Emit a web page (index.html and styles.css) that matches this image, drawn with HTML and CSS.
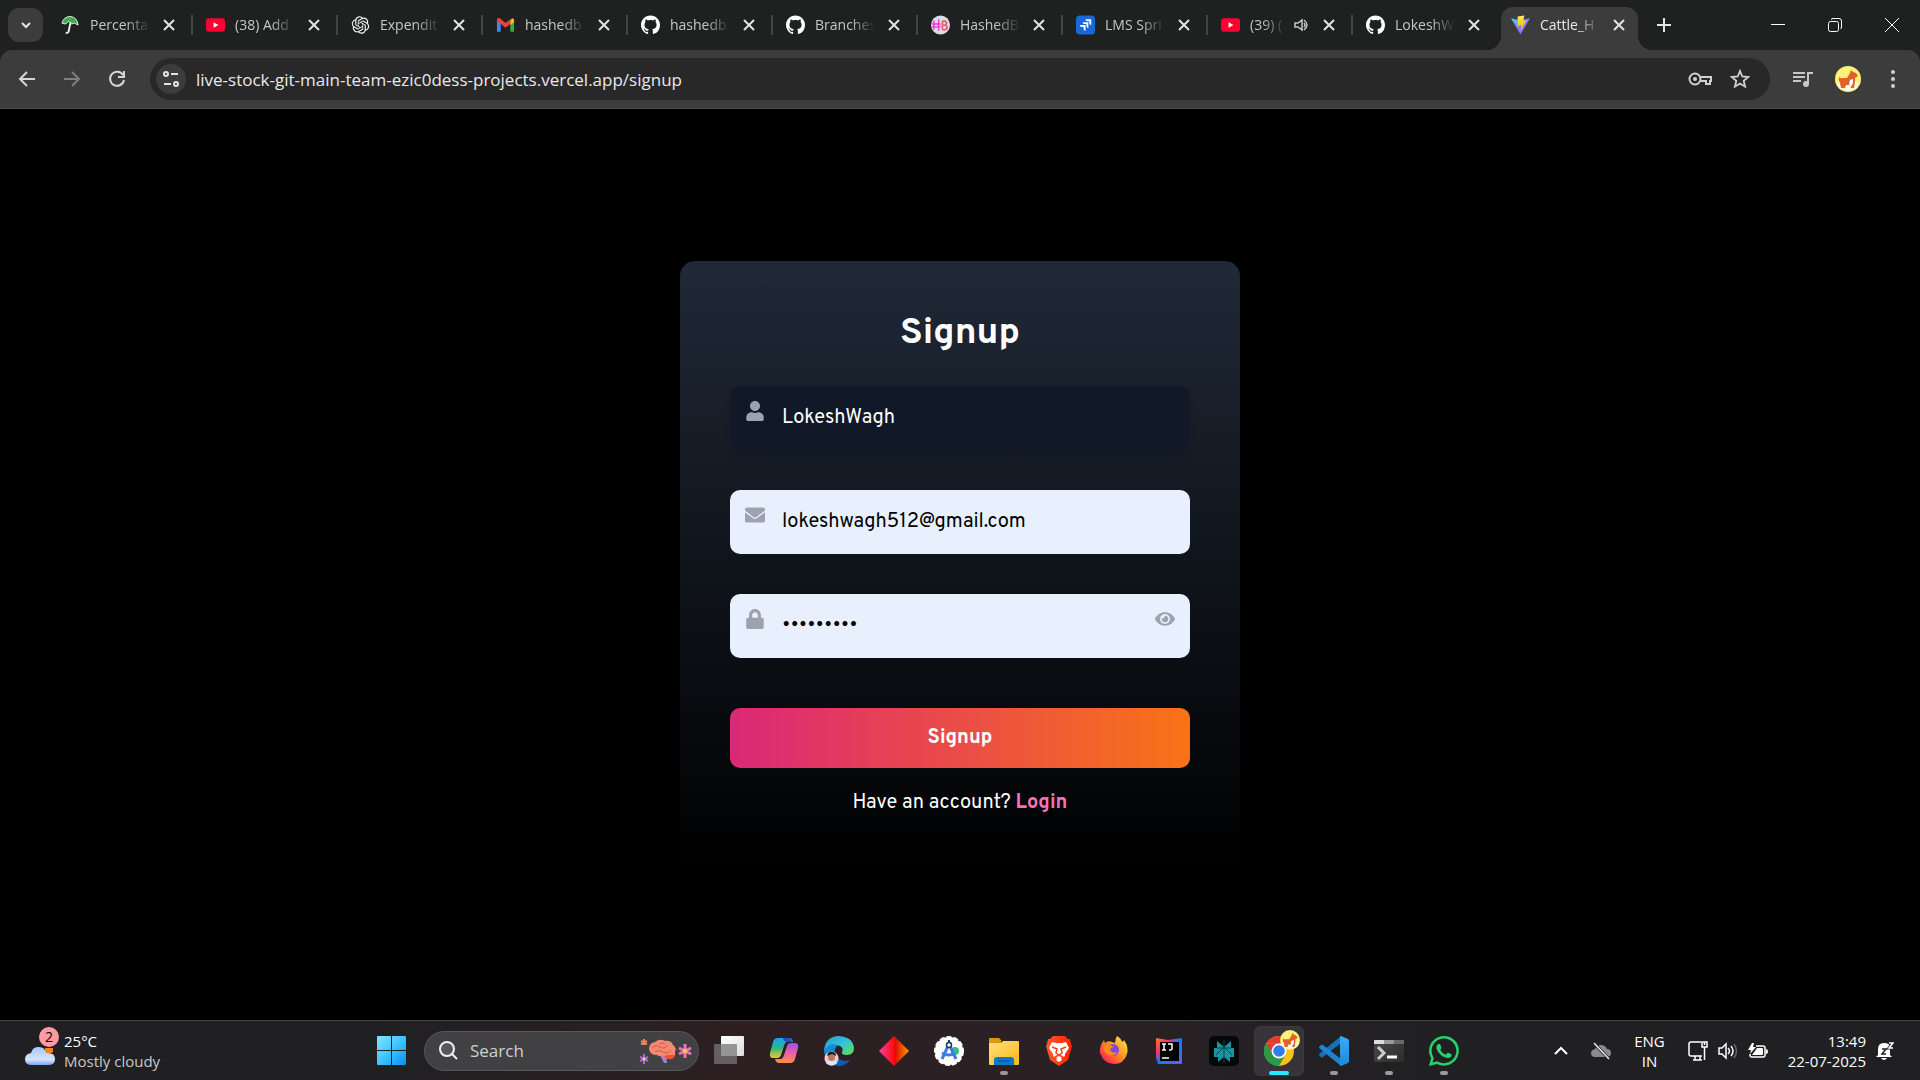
FILE: index.html
```html
<!DOCTYPE html>
<html lang="en">
<head>
<meta charset="utf-8">
<meta name="viewport" content="width=device-width, initial-scale=1">
<title>Cattle_H</title>
<link rel="stylesheet" href="styles.css">
</head>
<body>
<svg class="sprite" aria-hidden="true">
  <defs>
    <linearGradient id="g-win" x1="0" y1="0" x2="1" y2="1"><stop offset="0" stop-color="#8be3ff"/><stop offset=".5" stop-color="#3fc4ff"/><stop offset="1" stop-color="#0a8df5"/></linearGradient>
    <linearGradient id="g-cloud" x1="0" y1="0" x2="0" y2="1"><stop offset="0" stop-color="#a9c9fb"/><stop offset=".7" stop-color="#d5e3fc"/><stop offset="1" stop-color="#7ea6ec"/></linearGradient>
    <linearGradient id="g-vite" x1="0" y1="0" x2="1" y2="1"><stop offset="0" stop-color="#41d1ff"/><stop offset="1" stop-color="#bd34fe"/></linearGradient>
    <linearGradient id="g-bolt" x1="0" y1="0" x2="0" y2="1"><stop offset="0" stop-color="#ffea83"/><stop offset=".2" stop-color="#ffdd35"/><stop offset="1" stop-color="#ffa800"/></linearGradient>
    <linearGradient id="g-task" x1="0" y1="0" x2="1" y2="1"><stop offset="0" stop-color="#fff"/><stop offset="1" stop-color="#ddd"/></linearGradient>
    <linearGradient id="g-cop1" x1="0" y1="0" x2="0" y2="1"><stop offset="0" stop-color="#1aa5f2"/><stop offset=".5" stop-color="#2fb68a"/><stop offset="1" stop-color="#f3cc1c"/></linearGradient>
    <linearGradient id="g-cop2" x1="0" y1="0" x2="0" y2="1"><stop offset="0" stop-color="#9f4df0"/><stop offset=".5" stop-color="#ec5fa5"/><stop offset="1" stop-color="#ff8f3f"/></linearGradient>
    <linearGradient id="g-edge1" x1="0" y1="0" x2="1" y2="1"><stop offset="0" stop-color="#1f9de0"/><stop offset=".55" stop-color="#36c6d2"/><stop offset="1" stop-color="#66e043"/></linearGradient>
    <linearGradient id="g-edge2" x1="0" y1="0" x2="1" y2="1"><stop offset="0" stop-color="#1b9ae8"/><stop offset="1" stop-color="#0a4a94"/></linearGradient>
    <linearGradient id="g-dia"><stop offset="0" stop-color="#ff3fa8"/><stop offset=".5" stop-color="#ff0a0a"/><stop offset=".55" stop-color="#d91000"/><stop offset="1" stop-color="#ff9d00"/></linearGradient>
    <linearGradient id="g-fold" x1="0" y1="0" x2="1" y2="1"><stop offset="0" stop-color="#ffe07a"/><stop offset="1" stop-color="#fbb917"/></linearGradient>
    <linearGradient id="g-brave"><stop offset="0" stop-color="#ff5a2a"/><stop offset="1" stop-color="#ff2000"/></linearGradient>
    <linearGradient id="g-fox" x1="1" y1="0" x2="0" y2="1"><stop offset="0" stop-color="#fff44f"/><stop offset=".45" stop-color="#ff9420"/><stop offset=".8" stop-color="#ff3647"/><stop offset="1" stop-color="#e31587"/></linearGradient>
    <linearGradient id="g-ij" x1="0" y1="0" x2="1" y2="1"><stop offset="0" stop-color="#ff7a1a"/><stop offset=".3" stop-color="#fe2d75"/><stop offset=".5" stop-color="#087cfa"/><stop offset="1" stop-color="#6b57ff"/></linearGradient>
    <linearGradient id="g-code" x1="0" y1="0" x2="0" y2="1"><stop offset="0" stop-color="#35adf5"/><stop offset="1" stop-color="#1b8ada"/></linearGradient>
    <linearGradient id="g-term" x1="0" y1="0" x2="1" y2="1"><stop offset="0" stop-color="#4a4a4a"/><stop offset="1" stop-color="#2c2c2c"/></linearGradient>
  </defs>
  <symbol id="i-close" viewBox="0 0 20 20"><path d="M5 5l10 10M15 5L5 15" stroke="currentColor" stroke-width="2" fill="none"/></symbol>
  <symbol id="i-youtube" viewBox="0 0 20 20"><rect y="3" width="20" height="14" rx="3" fill="#ff0033"/><path d="M8 7v6l5-3z" fill="#fff"/></symbol>
  <symbol id="i-github" viewBox="0 0 16 16"><path fill="#fff" d="M8 0C3.58 0 0 3.58 0 8c0 3.54 2.29 6.53 5.47 7.59.4.07.55-.17.55-.38 0-.19-.01-.82-.01-1.49-2.01.37-2.53-.49-2.69-.94-.09-.23-.48-.94-.82-1.13-.28-.15-.68-.52-.01-.53.63-.01 1.08.58 1.23.82.72 1.21 1.87.87 2.33.66.07-.52.28-.87.51-1.07-1.78-.2-3.64-.89-3.64-3.95 0-.87.31-1.59.82-2.15-.08-.2-.36-1.02.08-2.12 0 0 .67-.21 2.2.82.64-.18 1.32-.27 2-.27s1.36.09 2 .27c1.53-1.04 2.2-.82 2.2-.82.44 1.1.16 1.92.08 2.12.51.56.82 1.27.82 2.15 0 3.07-1.87 3.75-3.65 3.95.29.25.54.73.54 1.48 0 1.07-.01 1.93-.01 2.2 0 .21.15.46.55.38A8.01 8.01 0 0 0 16 8c0-4.42-3.58-8-8-8z"/></symbol>
  <symbol id="i-dog" viewBox="0 0 26 26"><circle cx="13" cy="13" r="13" fill="#fff176"/><path d="M1 17a13 13 0 0 0 24 0q-12-4-24 0z" fill="#fff8dc"/><path d="M4 11q2 2 4 1h4l3-5 1-3 2 2 3 1 2 3-3 2v4l-1 6h-3l-1-3-4 0-1 3H6l-1-5q-2-3-1-6z" fill="#e2602a"/><path d="M15 14l3-1v4l-2 4-2-3z" fill="#fff"/></symbol>
</svg>

<div class="browser">
  <nav class="tabs" aria-label="Tabs">
    <button class="tab-search" aria-label="Search tabs"><svg width="16" height="16" viewBox="0 0 16 16"><path d="M4 6l4 4 4-4" fill="none" stroke="#e3e3e3" stroke-width="2"/></svg></button>

    <div class="tab">
      <svg class="favicon" viewBox="0 0 20 20"><path d="M1 8Q3 1 10 1q7 1 8 9l-4-2-3 1-3-3-3 3z" fill="#3fae49" stroke="#e8f5e9"/><path d="M10 7L8 17q-1 2-3 1" fill="none" stroke="#f0f0f0" stroke-width="2"/></svg>
      <span class="tab-title">Percenta</span><button class="tab-close" aria-label="Close tab"><svg><use href="#i-close"/></svg></button>
    </div>
    <div class="tab">
      <svg class="favicon"><use href="#i-youtube"/></svg>
      <span class="tab-title">(38) Add</span><button class="tab-close" aria-label="Close tab"><svg><use href="#i-close"/></svg></button>
    </div>
    <div class="tab">
      <svg class="favicon" viewBox="-1 -1 26 26"><path fill="#f2f2f2" d="M22.2819 9.8211a5.9847 5.9847 0 0 0-.5157-4.9108 6.0462 6.0462 0 0 0-6.5098-2.9A6.0651 6.0651 0 0 0 4.9807 4.1818a5.9847 5.9847 0 0 0-3.9977 2.9 6.0462 6.0462 0 0 0 .7427 7.0966 5.98 5.98 0 0 0 .511 4.9107 6.051 6.051 0 0 0 6.5146 2.9001A5.9847 5.9847 0 0 0 13.2599 24a6.0557 6.0557 0 0 0 5.7718-4.2058 5.9894 5.9894 0 0 0 3.9977-2.9001 6.0557 6.0557 0 0 0-.7475-7.0729zm-9.022 12.6081a4.4755 4.4755 0 0 1-2.8764-1.0408l.1419-.0804 4.7783-2.7582a.7948.7948 0 0 0 .3927-.6813v-6.7369l2.02 1.1686a.071.071 0 0 1 .038.052v5.5826a4.504 4.504 0 0 1-4.4945 4.4944zm-9.6607-4.1254a4.4708 4.4708 0 0 1-.5346-3.0137l.142.0852 4.783 2.7582a.7712.7712 0 0 0 .7806 0l5.8428-3.3685v2.3324a.0804.0804 0 0 1-.0332.0615L9.74 19.9502a4.4992 4.4992 0 0 1-6.1408-1.6464zM2.3408 7.8956a4.485 4.485 0 0 1 2.3655-1.9728V11.6a.7664.7664 0 0 0 .3879.6765l5.8144 3.3543-2.0201 1.1685a.0757.0757 0 0 1-.071 0l-4.8303-2.7865A4.504 4.504 0 0 1 2.3408 7.872zm16.5963 3.8558L13.1038 8.364 15.1192 7.2a.0757.0757 0 0 1 .071 0l4.8303 2.7913a4.4944 4.4944 0 0 1-.6765 8.1042v-5.6772a.79.79 0 0 0-.407-.667zm2.0107-3.0231l-.142-.0852-4.7735-2.7818a.7759.7759 0 0 0-.7854 0L9.409 9.2297V6.8974a.0662.0662 0 0 1 .0284-.0615l4.8303-2.7866a4.4992 4.4992 0 0 1 6.6802 4.66zM8.3065 12.863l-2.02-1.1638a.0804.0804 0 0 1-.038-.0567V6.0742a4.4992 4.4992 0 0 1 7.3757-3.4537l-.142.0805L8.704 5.459a.7948.7948 0 0 0-.3927.6813zm1.0976-2.3654l2.602-1.4998 2.6069 1.4998v2.9994l-2.5974 1.4997-2.6067-1.4997Z"/></svg>
      <span class="tab-title">Expendit</span><button class="tab-close" aria-label="Close tab"><svg><use href="#i-close"/></svg></button>
    </div>
    <div class="tab">
      <svg class="favicon" viewBox="0 0 20 20"><path d="M1 5v12h4V8z" fill="#4285f4"/><path d="M15 8v9h4V5z" fill="#34a853"/><path d="M15 5l2-2q2 0 2 2v2l-4 3z" fill="#fbbc04"/><path d="M1 5q0-3 3-2l6 5 5-4v5l-5 4-5-4-4-3z" fill="#ea4335"/></svg>
      <span class="tab-title">hashedb</span><button class="tab-close" aria-label="Close tab"><svg><use href="#i-close"/></svg></button>
    </div>
    <div class="tab">
      <svg class="favicon"><use href="#i-github"/></svg>
      <span class="tab-title">hashedb</span><button class="tab-close" aria-label="Close tab"><svg><use href="#i-close"/></svg></button>
    </div>
    <div class="tab">
      <svg class="favicon"><use href="#i-github"/></svg>
      <span class="tab-title">Branches</span><button class="tab-close" aria-label="Close tab"><svg><use href="#i-close"/></svg></button>
    </div>
    <div class="tab">
      <svg class="favicon" viewBox="0 0 20 20"><circle cx="10" cy="10" r="10" fill="#dadce8"/><path d="M3 5v10M8 4v12M1 9h9M1 12h9" stroke="#e93bd0" stroke-width="1.5" fill="none"/><path d="M12 6v9M12 6h3q3 2 0 4h-3M15 10q4 2 0 5h-3" stroke="#f2576b" stroke-width="1.8" fill="none"/></svg>
      <span class="tab-title">HashedB</span><button class="tab-close" aria-label="Close tab"><svg><use href="#i-close"/></svg></button>
    </div>
    <div class="tab">
      <svg class="favicon" viewBox="0 0 20 20"><rect width="20" height="20" rx="4" fill="#1868db"/><path d="M10 4h6v6q-2 0-2-2V6h-2q-2 0-2-2zM7 7h6v6q-2 0-2-2V9H9Q7 9 7 7zM4 10h6v6q-2 0-2-2v-2H6q-2 0-2-2z" fill="#fff"/></svg>
      <span class="tab-title">LMS Spri</span><button class="tab-close" aria-label="Close tab"><svg><use href="#i-close"/></svg></button>
    </div>
    <div class="tab">
      <svg class="favicon"><use href="#i-youtube"/></svg>
      <span class="tab-title">(39) (</span>
      <svg class="audio" viewBox="0 0 16 16"><path d="M1 6h3l4-3v10l-4-3H1zM10 6q2 2 0 4M10 3q6 5 0 10" fill="none" stroke="#c7c7c7" stroke-width="1.5"/></svg>
      <button class="tab-close" aria-label="Close tab"><svg><use href="#i-close"/></svg></button>
    </div>
    <div class="tab tab-last">
      <svg class="favicon"><use href="#i-github"/></svg>
      <span class="tab-title">LokeshW</span><button class="tab-close" aria-label="Close tab"><svg><use href="#i-close"/></svg></button>
    </div>
    <div class="tab tab-active" aria-current="page">
      <svg class="favicon" viewBox="0 0 20 20"><path d="M0 3l9 2 11-2-10 17z" fill="url(#g-vite)"/><path d="M7 1l7-1-1 6 3-1-6 12 1-7-4 1z" fill="url(#g-bolt)"/></svg>
      <span class="tab-title">Cattle_H</span><button class="tab-close" aria-label="Close tab"><svg><use href="#i-close"/></svg></button>
    </div>
    <button class="new-tab" aria-label="New tab"><svg width="14" height="14" viewBox="0 0 14 14"><path d="M7 0v14M0 7h14" stroke="#e3e3e3" stroke-width="2"/></svg></button>

    <div class="window-controls">
      <button aria-label="Minimize"><svg width="14" height="14" viewBox="0 0 14 14"><path d="M0 6.500h14" stroke="#fff"/></svg></button>
      <button aria-label="Restore"><svg width="14" height="14" viewBox="0 0 14 14"><rect x=".5" y="3.500" width="10" height="10" rx="2" fill="none" stroke="#fff"/><path d="M3 1.500Q4 .5 5 .5h6q2.500 0 2.500 2.500v6q0 1-1 2" fill="none" stroke="#fff"/></svg></button>
      <button aria-label="Close window"><svg width="14" height="14" viewBox="0 0 14 14"><path d="M0 0l14 14M14 0L0 14" stroke="#fff"/></svg></button>
    </div>
  </nav>

  <div class="toolbar">
    <button aria-label="Back"><svg width="18" height="18" viewBox="0 0 18 18"><path d="M17 9H2M9 2L2 9l7 7" fill="none" stroke="#d6d6d6" stroke-width="2"/></svg></button>
    <button aria-label="Forward"><svg width="18" height="18" viewBox="0 0 18 18"><path d="M1 9h15M9 2l7 7-7 7" fill="none" stroke="#7f7f7f" stroke-width="2"/></svg></button>
    <button aria-label="Reload"><svg width="18" height="18" viewBox="0 0 18 18"><path d="M15 5a7 7 0 1 0 1 5M16 1v6h-6" fill="none" stroke="#d6d6d6" stroke-width="2"/></svg></button>
    <div class="omnibox">
      <button class="site-info" aria-label="Site information"><svg width="18" height="18" viewBox="0 0 18 18" fill="none" stroke="#e3e3e3" stroke-width="2"><circle cx="4" cy="4" r="2"/><path d="M9 4h7M2 14h7"/><circle cx="14" cy="14" r="2"/></svg></button>
      <input class="url" type="text" aria-label="Address" value="live-stock-git-main-team-ezic0dess-projects.vercel.app/signup">
      <button aria-label="Passwords"><svg width="24" height="14" viewBox="0 0 24 14"><circle cx="7" cy="7" r="5.500" fill="none" stroke="#d0d0d0" stroke-width="2"/><circle cx="7" cy="7" r="2" fill="#d0d0d0"/><path d="M12 5h11v4h-1v3h-4V9h-6" fill="none" stroke="#d0d0d0" stroke-width="2"/></svg></button>
      <button aria-label="Bookmark this tab"><svg width="20" height="20" viewBox="0 0 20 20"><path d="M10 2l2.300 5.500 6 .5-4.600 3.900 1.400 5.800L10 14.600l-5.100 3.100 1.400-5.800L1.700 8l6-.5z" fill="none" stroke="#d0d0d0" stroke-width="1.800"/></svg></button>
    </div>
    <button aria-label="Media controls"><svg width="20" height="18" viewBox="0 0 20 18"><path d="M0 3h12M0 7h12M0 11h8" stroke="#c7c7c7" stroke-width="2"/><path d="M15 14V3h5" fill="none" stroke="#c7c7c7" stroke-width="2"/><circle cx="13" cy="14" r="3" fill="#c7c7c7"/></svg></button>
    <button aria-label="Profile"><svg width="26" height="26"><use href="#i-dog"/></svg></button>
    <button aria-label="Menu"><svg width="6" height="20" viewBox="0 0 6 20" fill="#d0d0d0"><circle cx="3" cy="3" r="2"/><circle cx="3" cy="10" r="2"/><circle cx="3" cy="17" r="2"/></svg></button>
  </div>
</div>

<main class="page">
  <form class="card">
    <h1>Signup</h1>
    <div class="field field-dark">
      <svg class="field-icon" viewBox="0 0 448 512"><path d="M224 256c70.7 0 128-57.3 128-128S294.700 0 224 0 96 57.300 96 128s57.300 128 128 128zm89.600 32h-16.700c-22.200 10.200-46.900 16-72.900 16s-50.600-5.800-72.900-16h-16.700C60.200 288 0 348.200 0 422.400V464c0 26.500 21.500 48 48 48h352c26.500 0 48-21.500 48-48v-41.600c0-74.200-60.200-134.400-134.400-134.400z"/></svg>
      <input type="text" aria-label="Username" value="LokeshWagh">
    </div>
    <div class="field">
      <svg class="field-icon" viewBox="0 0 512 512"><path d="M502.300 190.800c3.900-3.100 9.700-.2 9.700 4.700V400c0 26.500-21.500 48-48 48H48c-26.500 0-48-21.500-48-48V195.600c0-5 5.700-7.800 9.700-4.700 22.400 17.400 52.100 39.500 154.100 113.600 21.100 15.400 56.700 47.800 92.200 47.600 35.700.3 72-32.800 92.300-47.600 102-74.100 131.600-96.300 154-113.700zM256 320c23.200.4 56.600-29.200 73.400-41.400 132.700-96.300 142.800-104.700 173.400-128.700 5.800-4.500 9.200-11.500 9.200-18.900v-19c0-26.500-21.500-48-48-48H48c-26.500 0-48 21.500-48 48v19c0 7.400 3.400 14.300 9.200 18.900 30.600 23.900 40.700 32.400 173.400 128.700 16.800 12.200 50.200 41.800 73.400 41.400z"/></svg>
      <input type="email" aria-label="Email" value="lokeshwagh512@gmail.com">
    </div>
    <div class="field">
      <svg class="field-icon" viewBox="0 0 448 512"><path d="M400 224h-24v-72C376 68.200 307.800 0 224 0S72 68.200 72 152v72H48c-26.500 0-48 21.500-48 48v192c0 26.500 21.500 48 48 48h352c26.500 0 48-21.500 48-48V272c0-26.500-21.500-48-48-48zm-104 0H152v-72c0-39.700 32.300-72 72-72s72 32.300 72 72v72z"/></svg>
      <input type="password" aria-label="Password" value="lokesh512">
      <button class="reveal" type="button" aria-label="Show password"><svg viewBox="0 0 576 512"><path d="M572.520 241.400C518.290 135.590 410.930 64 288 64S57.680 135.640 3.480 241.410a32.350 32.350 0 0 0 0 29.190C57.710 376.410 165.070 448 288 448s230.320-71.640 284.520-177.410a32.350 32.350 0 0 0 0-29.190zM288 400a144 144 0 1 1 144-144 143.930 143.930 0 0 1-144 144zm0-240a95.310 95.310 0 0 0-25.310 3.790 47.850 47.850 0 0 1-66.900 66.900A95.780 95.780 0 1 0 288 160z"/></svg></button>
    </div>
    <button class="submit" type="button">Signup</button>
    <p class="login">Have an account? <a href="#login">Login</a></p>
  </form>
</main>

<footer class="taskbar">
  <button class="weather">
    <span class="weather-icon"><svg width="30" height="22" viewBox="0 0 30 22"><path d="M20 3h8v4l-2 1h-6z" fill="#f58220"/><path d="M7 20q-7 0-7-6 0-5 6-6Q8 1 14 2q6 0 7 6 9-1 9 6 0 6-7 6z" fill="url(#g-cloud)"/></svg><span class="badge">2</span></span>
    <span class="weather-text"><span>25°C</span><span class="dim">Mostly cloudy</span></span>
  </button>

  <nav class="apps" aria-label="Apps">
    <button class="app" aria-label="Start"><svg viewBox="0 0 30 30" fill="url(#g-win)"><path d="M1 0h13v14H0V1q0-1 1-1zM15 0h13q1 0 1 1v13H15zM0 15h14v14H1q-1 0-1-1zM15 15h14v13q0 1-1 1H15z"/></svg></button>
    <label class="search">
      <svg width="20" height="20" viewBox="0 0 20 20"><circle cx="8" cy="8" r="7" fill="#57575a" stroke="#f0f0f0" stroke-width="2"/><path d="M13 13l5 5" stroke="#f0f0f0" stroke-width="2"/></svg>
      <input type="text" placeholder="Search" aria-label="Search">
      <svg width="52" height="26" viewBox="0 0 52 26"><path d="M20 17l4 8h3l-1-8z" fill="#9a86d8"/><path d="M9 11q0-6 6-7 5-4 10-1 6-1 8 4 4 3 2 7 1 6-6 7-5 0-5-3-5 1-7-1-7 0-8-6z" fill="#f58a72"/><path d="M24 18q6-2 11-1-1 5-6 4-4 0-5-3z" fill="#ee5230"/><path d="M12 10q4-4 8-1t8-2M15 14q4-3 8 0t8-2M19 6q4-2 6 0" fill="none" stroke="#cf5a48"/><g stroke="#f172b4" stroke-width="3"><path d="M45 6v14M39 10l12 6M39 16l12-6"/></g><circle cx="45" cy="13" r="2" fill="#ffd84d"/><g stroke="#a86be8" stroke-width="2"><path d="M4 16v10M0 19l8 4M0 23l8-4"/></g><circle cx="4" cy="21" r="1.500" fill="#ffd84d"/><path d="M4 1v6M1 3l6 3M1 6l6-3" stroke="#ee8160" stroke-width="2"/></svg>
    </label>
    <button class="app" aria-label="Task view"><svg viewBox="0 0 30 30"><rect x="7" y="0" width="23" height="20" rx="1" fill="url(#g-task)"/><path d="M1 8h21q1 0 1 1v18q0 1-1 1H1q-1 0-1-1V9q0-1 1-1z" fill="#777" fill-opacity=".75"/></svg></button>
    <button class="app" aria-label="Copilot"><svg viewBox="0 0 30 30"><path d="M20 2q3 0 4 4h-6q-2 0-3 4l-3 9q-1 3-4 3H4q-4 0-3-5L4 6q1-4 5-4z" fill="url(#g-cop1)"/><path d="M9 2h10q3 0 4 4h-5q-3 0-4-4z" fill="#1b4fc4"/><path d="M10 27q-3 0-4-4h5q3 0 4-4l3-9q1-3 4-3h4q4 0 3 5l-3 11q-1 4-5 4z" fill="url(#g-cop2)"/></svg></button>
    <button class="app" aria-label="Edge"><svg viewBox="0 0 30 30"><path d="M0 14Q2 0 15 0q14 1 15 12 0 7-7 7-6 0-5-3 2-4-2-6-8-3-16 4z" fill="url(#g-edge1)"/><path d="M0 14q5-8 14-5-4 3-3 9 3 9 15 6-4 6-11 6Q1 29 0 14z" fill="url(#g-edge2)"/><circle cx="7.500" cy="22.500" r="7" fill="#f2c9d4"/><path d="M2 27q5-6 11 0-5 5-11 0z" fill="#d8e8f5"/><circle cx="7.500" cy="21.500" r="3.500" fill="#b97b5c"/><path d="M3 20q1-5 5-4 4 0 4 4l-4-2z" fill="#1c1a20"/></svg></button>
    <button class="app" aria-label="Diamond"><svg viewBox="0 0 30 30"><path d="M15 0l15 15-15 15L0 15z" fill="url(#g-dia)"/></svg></button>
    <button class="app" aria-label="Android Studio"><svg viewBox="0 0 30 30"><circle cx="15" cy="15" r="14" fill="#fff"/><circle cx="15" cy="15" r="14" fill="none" stroke="#fff" stroke-width="2" stroke-dasharray="5 2"/><circle cx="21" cy="15" r="4" fill="#36c26e"/><path d="M15 8L8 23M15 8l7 15M8 17q7 4 13 0" fill="none" stroke="#3b7de8" stroke-width="3"/><circle cx="15" cy="9" r="2.500" fill="#fff" stroke="#173b5c" stroke-width="1.500"/><path d="M15 4v3" stroke="#173b5c" stroke-width="2"/></svg></button>
    <button class="app open" aria-label="File Explorer"><svg viewBox="0 0 30 30"><path d="M0 3q0-1 1-1h9l3 3h-1v5H0z" fill="#d99a12"/><path d="M0 7h12l2-2h15q1 0 1 1v22q0 1-1 1H1q-1 0-1-1z" fill="url(#g-fold)"/><path d="M5 29v-5q0-3 3-3h14q3 0 3 3v5z" fill="#0f78c8"/><path d="M9 25h12" stroke="#0b4f8e"/></svg></button>
    <button class="app" aria-label="Brave"><svg viewBox="0 0 30 30"><path d="M9 0h12l3 3h2l1 5 1 2-4 14-9 6-9-6L2 10l1-2 1-5h2z" fill="url(#g-brave)"/><path d="M8 6l4 1h6l4-1 3 6-4 6 0 2-4 2 1 2-3 2-3-2 1-2-4-2 0-2-4-6z" fill="#fff"/><path d="M8 11l5 2-1 4 3 2 3-2-1-4 5-2M11 21l4-2 4 2" fill="none" stroke="#ff3d17" stroke-width="1.500"/></svg></button>
    <button class="app" aria-label="Firefox"><svg viewBox="0 0 30 30"><path d="M18 0q4 2 5 6 2-1 2-2 5 7 3 14-3 10-13 10T1 17Q0 10 5 4l1 3q3-3 7-1l3 1q0-4 2-7z" fill="url(#g-fox)"/><circle cx="14" cy="14" r="6" fill="#8446e0"/><path d="M4 11q4-4 7-2l4 2q-4 1-4 3 2 4 7 2-2 5-8 3-5-2-6-8z" fill="#ff8a1c"/></svg></button>
    <button class="app" aria-label="IntelliJ IDEA"><svg viewBox="0 0 30 30"><path d="M2 2l12 2L28 2v26H4L2 22z" fill="url(#g-ij)"/><rect x="6" y="6" width="19" height="19"/><path d="M8 8h4M10 8v6M8 14h4M14 8h4v5q0 1-3 1M8 22h7" fill="none" stroke="#fff" stroke-width="1.500"/></svg></button>
    <button class="app" aria-label="Perplexity"><svg viewBox="0 0 30 30"><rect width="30" height="30" rx="5" fill="#050808"/><path d="M15 11L8 5v7H5v9h4v5l6-5 6 5v-5h4v-9h-3V5z" fill="#1a93a3"/><path d="M15 3v24M15 11l-8 8M15 11l8 8M8 12h14" fill="none" stroke="#0b4650"/></svg></button>
    <button class="app current" aria-label="Chrome"><svg viewBox="0 0 30 30"><circle cx="15" cy="15" r="15" fill="#fbc116"/><path d="M2 7.500A15 15 0 0 1 28 7.500H15z" fill="#e33b2e"/><path d="M2 7.500A15 15 0 0 0 15 30l6.500-11.300L15 15z" fill="#2a9a48"/><path d="M2 7.500l6.500 11.300L15 7.500z" fill="#e33b2e"/><path d="M2 7.500l6.500 11.200 6.500 3-2 8A15 15 0 0 1 2 7.500z" fill="#2a9a48"/><circle cx="15" cy="15" r="7.500" fill="#fff"/><circle cx="15" cy="15" r="5.800" fill="#317bea"/></svg><svg class="app-badge"><use href="#i-dog"/></svg></button>
    <button class="app open" aria-label="Visual Studio Code"><svg viewBox="0 0 30 30"><path d="M0 19l2 2q1 1 2 0L22 7V0L0 18q0 1 0 1z" fill="#1272b8"/><path d="M0 11l2-2q1-1 2 0l18 14v7L0 12z" fill="#1b84cf"/><path d="M22 0l7 3q1 1 1 2v20q0 1-1 2l-7 3q-1 0-1-1V1q0-1 1-1z" fill="url(#g-code)"/></svg></button>
    <button class="app open" aria-label="Terminal"><svg viewBox="0 0 30 30"><rect y="4" width="30" height="22" rx="1" fill="url(#g-term)"/><path d="M0 8V5q0-1 1-1h9v4z" fill="#ddd"/><path d="M10 4h10v4H10z" fill="#999"/><path d="M20 4h9q1 0 1 1v3H20z" fill="#6a6a6a"/><path d="M4 11l6 6-6 6" fill="none" stroke="#ccc" stroke-width="3"/><path d="M13 21h10" stroke="#fff" stroke-width="3"/></svg></button>
    <button class="app open" aria-label="WhatsApp"><svg viewBox="0 0 16 16"><path fill="#25d366" d="M13.601 2.326A7.854 7.854 0 0 0 7.994 0C3.627 0 .068 3.558.064 7.926c0 1.399.366 2.760 1.057 3.965L0 16l4.204-1.102a7.933 7.933 0 0 0 3.790.965h.004c4.368 0 7.926-3.558 7.930-7.930A7.898 7.898 0 0 0 13.600 2.326zM7.994 14.521a6.573 6.573 0 0 1-3.356-.92l-.24-.144-2.494.654.666-2.433-.156-.251a6.560 6.560 0 0 1-1.007-3.505c0-3.626 2.957-6.584 6.591-6.584a6.560 6.560 0 0 1 4.660 1.931 6.557 6.557 0 0 1 1.928 4.660c-.004 3.639-2.961 6.592-6.592 6.592zm3.615-4.934c-.197-.099-1.170-.578-1.353-.646-.182-.065-.315-.099-.445.099-.133.197-.513.646-.627.775-.114.133-.232.148-.43.05-.197-.1-.836-.308-1.592-.985-.59-.525-.985-1.175-1.103-1.372-.114-.198-.011-.304.088-.403.087-.088.197-.232.296-.346.1-.114.133-.198.198-.33.065-.134.034-.248-.015-.347-.05-.099-.445-1.076-.612-1.470-.16-.389-.323-.335-.445-.34-.114-.007-.247-.007-.38-.007a.729.729 0 0 0-.529.247c-.182.198-.691.677-.691 1.654 0 .977.71 1.916.81 2.049.098.133 1.394 2.132 3.383 2.992.47.205.84.326 1.129.418.475.152.904.129 1.246.08.38-.058 1.171-.48 1.338-.943.164-.464.164-.86.114-.992-.049-.133-.182-.198-.38-.297z"/></svg></button>
  </nav>

  <div class="tray">
    <button aria-label="Show hidden icons"><svg width="14" height="10" viewBox="0 0 14 10"><path d="M1 8l6-6 6 6" fill="none" stroke="#fff" stroke-width="2"/></svg></button>
    <button class="cloud" aria-label="OneDrive"><svg width="20" height="18" viewBox="0 0 20 18"><path d="M4 15q-4 0-4-4 0-3 4-4 2-4 6-4t6 4q4 0 4 4t-4 4z" fill="#8b8b8d"/><path d="M3 1l15 16" stroke="#222" stroke-width="3"/><path d="M3 1l15 16" stroke="#eee" stroke-width="1.500"/></svg></button>
    <button class="lang"><span>ENG</span><span>IN</span></button>
    <button class="status" aria-label="Network, volume and battery">
      <svg width="20" height="20" viewBox="0 0 20 20" fill="none" stroke="#fff" stroke-width="1.500"><path d="M13 1H3Q1 1 1 3v10q0 2 2 2h11M5 19h9M7 15v4M12 15v4M14 1h5v5h-5zM16.500 6v13M16.500 1v3"/></svg>
      <svg width="20" height="18" viewBox="0 0 20 18" fill="none" stroke="#fff" stroke-width="1.500"><path d="M1 6h3l4-4v14l-4-4H1zM10 6q3 3 0 6M13 4q4 5 0 10"/><path d="M16 2q5 7 0 14" stroke="#666"/></svg>
      <svg width="20" height="16" viewBox="0 0 20 16"><path d="M8 3h7q2 0 2 2v7q0 2-2 2H4q-2 0-2-2v-1" fill="none" stroke="#fff" stroke-width="1.500"/><path d="M9 5h5q1 0 1 1v5q0 1-1 1H4l3-4zM18 6q2 0 2 2.500T18 11zM4 0L0 7h3l-1 4 6-7H5l1-4z" fill="#fff"/></svg>
    </button>
    <button class="clock"><time>13:49</time><time>22-07-2025</time></button>
    <button class="bell" aria-label="Notifications"><svg width="18" height="20" viewBox="0 0 18 20"><path d="M2 14V8q0-6 6-6 7 0 6 6v6l2 2H0zM5 17h6q-3 4-6 0z" fill="#fff"/><path d="M6 8h4l-4 5h4" fill="none" stroke="#222" stroke-width="1.500"/><path d="M13 2h4l-4 5h4" fill="none" stroke="#222" stroke-width="3"/><path d="M13 2h4l-4 5h4" fill="none" stroke="#fff" stroke-width="1.500"/></svg></button>
  </div>
</footer>
</body>
</html>
```
FILE: styles.css
```css
* { box-sizing: border-box; }

body {
  margin: 0;
  min-height: 100vh;
  display: flex;
  flex-direction: column;
  background: #000;
  color: #fff;
  font-family: "Open Sans", "Noto Sans", sans-serif;
  font-size: 14px;
}

button {
  display: flex;
  align-items: center;
  justify-content: center;
  padding: 0;
  border: 0;
  background: none;
  color: inherit;
  font: inherit;
}

input {
  min-width: 0;
  border: 0;
  outline: 0;
  background: none;
  color: inherit;
  font: inherit;
}

svg { display: block; flex: none; }

.sprite { position: absolute; width: 0; height: 0; }

/* Browser tabs */
.browser { background: #1f2020; }

.tabs { display: flex; height: 50px; padding-left: 8px; }

.tab-search {
  width: 35px;
  height: 34px;
  margin: 8px 5px 0 0;
  border-radius: 11px;
  background: #3c3c3c;
}

.tab {
  display: flex;
  align-items: center;
  flex: none;
  width: 145px;
  height: 50px;
  padding: 0 14px 0 13px;
  background: linear-gradient(#434443, #434443) right 15px / 2px 20px no-repeat;
  color: #c7c7c7;
}

.favicon { width: 19px; height: 20px; margin-right: 10px; }

.tab-title {
  flex: 1;
  min-width: 0;
  white-space: nowrap;
  line-height: 20px;
  -webkit-mask-image: linear-gradient(to left, transparent, #000 24px);
  mask-image: linear-gradient(to left, transparent, #000 24px);
}

.tab-close { width: 20px; height: 20px; margin-left: 9px; color: #e3e3e3; }
.tab-close svg { width: 20px; height: 20px; }

.audio { width: 16px; height: 16px; margin-left: 8px; }

.tab-last { background: none; }

.tab-active {
  position: relative;
  width: 137px;
  height: 43px;
  margin: 7px 0 0 3px;
  padding: 0 9px 7px 10px;
  border-radius: 12px 12px 0 0;
  background: #3c3c3c;
  color: #e8e8e8;
}

.tab-active::before,
.tab-active::after {
  content: "";
  position: absolute;
  bottom: 0;
  width: 14px;
  height: 14px;
}
.tab-active::before { right: 100%; background: radial-gradient(circle at 0 0, transparent 14px, #3c3c3c 14px); }
.tab-active::after { left: 100%; background: radial-gradient(circle at 100% 0, transparent 14px, #3c3c3c 14px); }

.new-tab { width: 30px; margin-left: 11px; }

.window-controls { display: flex; margin-left: auto; }
.window-controls button { width: 57px; }

/* Browser toolbar */
.toolbar {
  display: flex;
  align-items: center;
  gap: 15px;
  padding: 8px 12px;
  border-bottom: 1px solid #4b4b4b;
  border-radius: 12px 12px 0 0;
  background: #3c3c3c;
}
.toolbar button { width: 30px; height: 30px; flex: none; }

.omnibox {
  display: flex;
  align-items: center;
  gap: 10px;
  flex: 1;
  height: 42px;
  margin: 0 3px;
  padding: 0 15px 0 6px;
  border-radius: 21px;
  background: #282828;
}
.omnibox .site-info { border-radius: 50%; background: #3c3c3c; }

.url { flex: 1; padding: 0; color: #e8e8e8; font-size: 17px; }

/* Signup page */
.page {
  flex: 1;
  display: flex;
  align-items: center;
  justify-content: center;
  font-family: "Overpass", Roboto, sans-serif;
  font-size: 20px;
}

.card {
  display: flex;
  flex-direction: column;
  width: 100%;
  max-width: 560px;
  padding: 50px;
  border-radius: 15px;
  background: linear-gradient(#1f2937, #000);
}

h1 {
  margin: 0 0 29px;
  font-size: 37px;
  line-height: 46px;
  font-weight: 700;
  text-align: center;
}

.field {
  display: flex;
  align-items: flex-start;
  height: 64px;
  margin-bottom: 40px;
  padding: 15px;
  border-radius: 10px;
  background: #e8f0fe;
  color: #000;
}
.field-dark {
  background: #111827;
  color: #fff;
  box-shadow: 0 4px 6px rgba(0, 0, 0, .1);
}
.field input { flex: 1; height: 34px; padding: 0 0 0 17px; }

.field-icon { width: 20px; height: 20px; fill: #9ca3af; }

.reveal { width: 20px; height: 20px; }
.reveal svg { width: 20px; height: 18px; fill: #9ca3af; }

.submit {
  height: 60px;
  margin-top: 10px;
  border-radius: 10px;
  background: linear-gradient(to right, #db2777, #f97316);
  font-weight: 700;
}

.login { margin: 20px 0 0; line-height: 30px; text-align: center; }
.login a { color: #f472b6; font-weight: 700; text-decoration: none; }

/* Taskbar */
.taskbar {
  display: flex;
  align-items: center;
  height: 60px;
  padding: 0 26px 0 25px;
  border-top: 1px solid #444;
  background: linear-gradient(to right, #202022 20%, #2d1f22 38%, #2a2124 55%, #202023 75%);
  font-size: 15px;
  line-height: 20px;
}

.weather { width: 342px; justify-content: flex-start; gap: 9px; }
.weather-icon { position: relative; padding-top: 10px; }
.badge {
  position: absolute;
  top: -8px;
  left: 14px;
  width: 20px;
  height: 20px;
  border-radius: 50%;
  background: #ff99a4;
  color: #000;
  text-align: center;
  font-size: 14px;
}
.weather-text { display: flex; flex-direction: column; text-align: left; }
.dim { color: #c8c8c8; }

.apps { display: flex; align-items: center; gap: 5px; }

.app {
  position: relative;
  width: 50px;
  height: 50px;
  border: 1px solid transparent;
  border-radius: 6px;
}
.app > svg { width: 30px; height: 30px; }
.open::after,
.current::after {
  content: "";
  position: absolute;
  bottom: 0;
  width: 8px;
  height: 4px;
  border-radius: 2px;
  background: #9a9a9c;
}
.current { border-color: #3d3b40; background: #36343a; }
.current::after { width: 20px; background: #26e8ff; }
.app > .app-badge { position: absolute; top: 3px; right: 3px; width: 20px; height: 20px; }

.search {
  display: flex;
  align-items: center;
  gap: 11px;
  width: 275px;
  height: 40px;
  margin-left: 2px;
  padding: 0 6px 0 14px;
  border: 1px solid #58565a;
  border-radius: 20px;
  background: #414042;
}
.search input { flex: 1; width: 0; padding: 0; font-size: 17px; }
.search input::placeholder { color: #d0d0d0; opacity: 1; }

.tray { display: flex; align-items: center; gap: 23px; margin-left: auto; }
.status { gap: 10px; }
.lang, .clock { flex-direction: column; }
.clock { align-items: flex-end; margin-left: -3px; }
.bell { margin-left: -13px; }
```
